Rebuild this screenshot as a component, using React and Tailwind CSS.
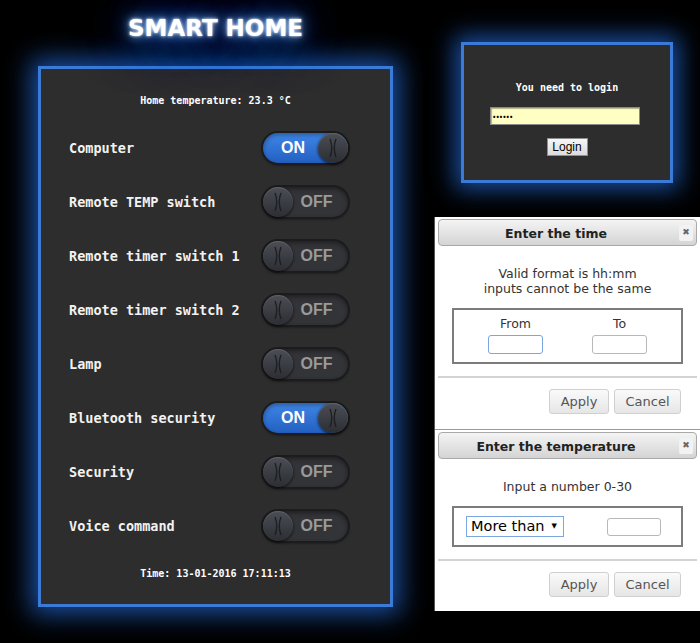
const devices = [
  { name: "Computer", on: true },
  { name: "Remote TEMP switch", on: false },
  { name: "Remote timer switch 1", on: false },
  { name: "Remote timer switch 2", on: false },
  { name: "Lamp", on: false },
  { name: "Bluetooth security", on: true },
  { name: "Security", on: false },
  { name: "Voice command", on: false },
];

function Knob() {
  return (
    <div className="h-[30px] w-[30px] shrink-0 rounded-full bg-gradient-to-b from-[#4b4e55] to-[#2c2e33] shadow-[0_1px_3px_rgba(0,0,0,0.8),inset_0_1px_1px_rgba(255,255,255,0.12)]">
      <svg viewBox="0 0 30 30" className="h-full w-full">
        <path d="M12 6 Q15.5 15 12 24" fill="none" stroke="#1e1f22" strokeWidth="1.4" />
        <path d="M18 6 Q14.5 15 18 24" fill="none" stroke="#1e1f22" strokeWidth="1.4" />
      </svg>
    </div>
  );
}

function Toggle({ on }) {
  if (on) {
    return (
      <div className="flex h-[30px] w-[85px] items-center rounded-full bg-gradient-to-b from-[#3f86e6] to-[#2360c2] shadow-[0_0_0_2px_#1c1c1e,0_2px_3px_rgba(0,0,0,0.6),inset_0_2px_4px_rgba(0,0,0,0.35)]">
        <span className="flex-1 pl-[5px] text-center font-['Liberation_Sans',sans-serif] text-[16px] font-bold text-white">ON</span>
        <Knob />
      </div>
    );
  }
  return (
    <div className="flex h-[30px] w-[85px] items-center rounded-full bg-[#333438] shadow-[0_0_0_2px_#1c1c1e,0_2px_3px_rgba(0,0,0,0.6),inset_0_2px_4px_rgba(0,0,0,0.4)]">
      <Knob />
      <span className="flex-1 pr-[8px] text-center font-['Liberation_Sans',sans-serif] text-[16px] font-bold text-[#9a9a9a]">OFF</span>
    </div>
  );
}

function DialogHeader({ title }) {
  return (
    <div className="mx-[3px] flex h-[27px] items-center rounded-[4px] border border-[#a9a9a9] bg-gradient-to-b from-[#f4f4f4] to-[#d4d4d4] pr-[3px]">
      <span className="flex-1 pr-[6px] pt-[3px] text-center text-[12.5px] font-bold text-[#222]">{title}</span>
      <span className="flex h-[16px] w-[14px] items-center justify-center rounded-[2px] bg-[#f2f2f2] text-[9px] leading-none text-[#666]">✖</span>
    </div>
  );
}

function DialogButtons() {
  return (
    <div className="flex justify-end gap-[5px] pr-[19px]">
      <button className="h-[25px] w-[60px] rounded-[3px] border border-[#d0d0d0] bg-gradient-to-b from-[#fafafa] to-[#e6e6e6] text-[13px] text-[#555]">
        Apply
      </button>
      <button className="h-[25px] w-[67px] rounded-[3px] border border-[#d0d0d0] bg-gradient-to-b from-[#fafafa] to-[#e6e6e6] text-[13px] text-[#555]">
        Cancel
      </button>
    </div>
  );
}

export default function App() {
  return (
    <div className="flex h-[643px] w-[700px] overflow-hidden bg-black">
      <div className="w-[434px] shrink-0 pl-[38px]">
        <div className="h-[66px] w-[355px] pt-[14px] text-center">
          <h1 className="font-['DejaVu_Sans',sans-serif] text-[23px] font-bold leading-[28px] text-white [text-shadow:0_0_3px_#fff,0_0_8px_#8cc2ff,0_0_20px_#2f7fff,0_0_40px_#1d5fd0,0_0_60px_#174aa8]">
            SMART HOME
          </h1>
        </div>
        <div className="h-[541px] w-[355px] border-[3px] border-[#3b7ad6] bg-[#2d2d2d] font-['DejaVu_Sans_Mono',monospace] shadow-[0_0_24px_7px_rgba(35,105,215,0.75)]">
          <div className="pt-[24px]">
            <p className="h-[16px] text-center text-[10px] font-bold leading-[16px] text-white">Home temperature: 23.3 °C</p>
            <div className="mt-[12px]">
              {devices.map((d) => (
                <div key={d.name} className="flex h-[54px] items-center justify-between pl-[28px] pr-[42px]">
                  <span className="text-[13.5px] font-bold text-[#f2f2f2]">{d.name}</span>
                  <Toggle on={d.on} />
                </div>
              ))}
            </div>
            <p className="mt-[13px] h-[16px] text-center text-[10px] font-bold leading-[16px] text-white">Time: 13-01-2016 17:11:13</p>
          </div>
        </div>
      </div>

      <div className="w-[266px] shrink-0 pt-[42px]">
        <div className="ml-[27px] flex h-[141px] w-[212px] flex-col items-center border-[3px] border-[#3b7ad6] bg-[#2d2d2d] pt-[37px] shadow-[0_0_22px_6px_rgba(35,105,215,0.75)]">
          <p className="h-[12px] font-['DejaVu_Sans_Mono',monospace] text-[10px] font-bold leading-[12px] text-white">You need to login</p>
          <div className="mr-[5px] mt-[13px] flex h-[18px] w-[150px] items-center border border-[#8a8a8a] bg-[#ffffc4] pl-[2px] text-[9px] leading-none text-black shadow-[inset_1px_1px_1px_rgba(0,0,0,0.3)]">
            ••••••
          </div>
          <button className="mt-[13px] h-[18px] w-[41px] border border-[#8e8e8e] bg-gradient-to-b from-[#f6f6f6] to-[#dcdcdc] font-['Liberation_Sans',sans-serif] text-[12px] leading-none text-black">
            Login
          </button>
        </div>

        <div className="mt-[34px] border-l border-[#555] bg-white font-['DejaVu_Sans',sans-serif]">
          <div className="h-[213px] border-b border-[#9a9a9a] pt-[2px]">
            <DialogHeader title="Enter the time" />
            <div className="mt-[20px] text-center text-[12.5px] leading-[15px] text-[#333]">
              <p>Valid format is hh:mm</p>
              <p>inputs cannot be the same</p>
            </div>
            <div className="mx-[17px] mt-[12px] flex h-[56px] gap-[49px] border-2 border-[#7c7c7c] pl-[34px] pt-[6px]">
              <div className="flex w-[55px] flex-col items-center">
                <span className="text-[12.5px] leading-[16px] text-[#333]">From</span>
                <div className="mt-[3px] h-[19px] w-[55px] rounded-[3px] border border-[#7ba6e0]" />
              </div>
              <div className="flex w-[55px] flex-col items-center">
                <span className="text-[12.5px] leading-[16px] text-[#333]">To</span>
                <div className="mt-[3px] h-[19px] w-[55px] rounded-[3px] border border-[#b8b8b8]" />
              </div>
            </div>
            <div className="mx-[3px] mt-[12px] h-[2px] bg-[#d4d4d4]" />
            <div className="mt-[11px]">
              <DialogButtons />
            </div>
          </div>

          <div className="h-[181px] pt-[2px]">
            <DialogHeader title="Enter the temperature" />
            <p className="mt-[20px] text-center text-[12.5px] leading-[15px] text-[#333]">Input a number 0-30</p>
            <div className="mx-[17px] mt-[12px] flex h-[41px] items-center border-2 border-[#7c7c7c] pl-[12px]">
              <div className="flex h-[21px] w-[98px] items-center justify-between border border-[#7ba6e0] pl-[4px] pr-[6px] text-[14.5px] text-black">
                <span>More than</span>
                <span className="text-[7px]">▼</span>
              </div>
              <div className="ml-[43px] h-[18px] w-[54px] rounded-[3px] border border-[#b8b8b8]" />
            </div>
            <div className="mx-[3px] mt-[12px] h-[2px] bg-[#d4d4d4]" />
            <div className="mt-[11px]">
              <DialogButtons />
            </div>
          </div>
        </div>
      </div>
    </div>
  );
}
